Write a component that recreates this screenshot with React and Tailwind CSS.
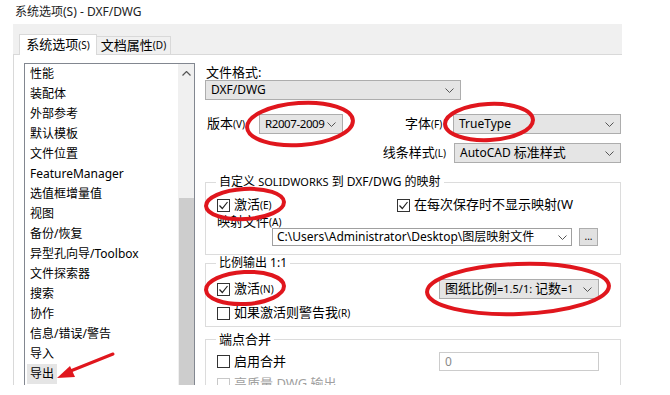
import React from 'react';

const Chevron = () => (
  <svg width="9" height="5" viewBox="0 0 9 5" className="shrink-0">
    <path d="M0.5 0.5 L4.5 4.5 L8.5 0.5" fill="none" stroke="#555" strokeWidth="1" />
  </svg>
);

const Combo = ({ children, className }) => (
  <div className={`h-[20px] border border-[#adadad] bg-[#e5e5e5] flex items-center justify-between pl-[5px] pr-[6px] ${className}`}>
    <span className="whitespace-nowrap">{children}</span>
    <Chevron />
  </div>
);

const Check = ({ checked, disabled }) => (
  <span className={`w-[13px] h-[13px] border ${disabled ? 'border-[#c8c8c8]' : 'border-[#333]'} bg-white flex items-center justify-center shrink-0`}>
    {checked && (
      <svg width="11" height="11" viewBox="0 0 11 11">
        <path d="M1.5 5.5 L4.3 8.5 L9.5 2" fill="none" stroke="#222" strokeWidth="1.2" />
      </svg>
    )}
  </span>
);

const Key = ({ k }) => <span className="text-[10px]">({k})</span>;

const items = [
  '性能', '装配体', '外部参考', '默认模板', '文件位置', 'FeatureManager', '选值框增量值', '视图',
  '备份/恢复', '异型孔向导/Toolbox', '文件探索器', '搜索', '协作', '信息/错误/警告', '导入', '导出',
];

const App = () => {
  return (
    <div className="relative w-[670px] h-[395px] bg-white overflow-hidden text-[12px] text-black font-['Noto_Sans','Noto_Sans_CJK_SC',sans-serif]">
      <div className="h-[24px] pl-[15px] flex items-center text-[12px] text-[#222]">系统选项(S) - DXF/DWG</div>

      <div className="ml-[13px] w-[609px] h-[31px] bg-[#f0f0f0] border-b border-[#d9d9d9] flex items-end pl-[6px]">
        <div className="w-[78px] h-[21px] -mb-px bg-white border border-b-0 border-[#d9d9d9] flex items-center justify-center text-[13px]">
          系统选项<Key k="S" />
        </div>
        <div className="w-[74px] h-[18px] bg-[#f0f0f0] border border-b-0 border-l-0 border-[#d9d9d9] flex items-center justify-center text-[13px]">
          文档属性<Key k="D" />
        </div>
      </div>

      <div className="ml-[13px] h-[330px] border-l border-[#d9d9d9] overflow-hidden flex pl-[10px] pt-[8px]">
        <div className="w-[171px] h-[340px] border border-[#828790] flex shrink-0">
          <div className="flex-1">
            {items.map((t) => (
              <div key={t} className="h-[20px] flex items-center pl-[2px]">
                <span className={`px-[3px] leading-[20px] ${t === '导出' ? 'bg-[#e5e5e5]' : ''}`}>{t}</span>
              </div>
            ))}
          </div>
          <div className="w-[16px] bg-[#f0f0f0] flex flex-col items-center">
            <div className="h-[18px] flex items-center">
              <svg width="9" height="5" viewBox="0 0 9 5">
                <path d="M0.5 4.5 L4.5 0.5 L8.5 4.5" fill="none" stroke="#555" strokeWidth="1.2" />
              </svg>
            </div>
            <div className="mt-[116px] w-[15px] flex-1 bg-[#cdcdcd]" />
          </div>
        </div>

        <div className="ml-[10px] w-[416px] shrink-0 flex flex-col mt-[1px]">
          <div className="h-[16px] leading-[16px] pl-[1px] text-[13px]">文件格式:</div>
          <Combo className="w-[256px]">DXF/DWG</Combo>

          <div className="flex items-center h-[20px] mt-[14px]">
            <span className="w-[54px] pl-[2px] text-[13px]">版本<Key k="V" /></span>
            <Combo className="w-[84px] text-[11.5px] tracking-[-0.4px]">R2007-2009</Combo>
            <span className="ml-[62px] w-[48px] text-[13px]">字体<Key k="F" /></span>
            <Combo className="w-[168px]">TrueType</Combo>
          </div>

          <div className="flex items-center justify-end h-[20px] mt-[9px]">
            <span className="text-[13px]">线条样式<Key k="L" /></span>
            <Combo className="ml-[8px] w-[167px]">AutoCAD <span className="text-[13px]">标准样式</span></Combo>
          </div>

          <fieldset className="mt-[11px] border border-[#dcdcdc] px-[11px] pb-[8px]">
            <legend className="-ml-px px-[3px] leading-[16px] text-[12px]">
              自定义 <span className="text-[11px]">SOLIDWORKS</span> 到 DXF/DWG 的映射
            </legend>
            <div className="flex items-center h-[16px] mt-[7px]">
              <div className="w-[180px] flex items-center">
                <Check checked />
                <span className="ml-[4px] text-[13px]">激活<Key k="E" /></span>
              </div>
              <Check checked />
              <span className="ml-[4px] text-[13px] whitespace-nowrap">在每次保存时不显示映射(W</span>
            </div>
            <div className="h-[14px] leading-[14px] mt-[1px] text-[13px]">映射文件<Key k="A" /></div>
            <div className="flex items-center pl-[55px]">
              <div className="w-[300px] h-[18px] bg-white border border-[#a0a0a0] flex items-center justify-between pl-[4px] pr-[4px]">
                <span className="text-[12px] whitespace-nowrap">C:\Users\Administrator\Desktop\图层映射文件</span>
                <Chevron />
              </div>
              <div className="ml-[7px] w-[19px] h-[18px] bg-[#e1e1e1] border border-[#adadad] flex items-center justify-center text-[10px] leading-none pb-[3px]">...</div>
            </div>
          </fieldset>

          <fieldset className="border border-[#dcdcdc] px-[11px] pb-[5px]">
            <legend className="-ml-px px-[3px] leading-[16px] text-[12px]">比例输出 1:1</legend>
            <div className="flex items-center justify-between h-[20px] mt-[8px]">
              <div className="flex items-center">
                <Check checked />
                <span className="ml-[4px] text-[13px]">激活<Key k="N" /></span>
              </div>
              <Combo className="w-[160px] mr-[10px] text-[13px]">
                图纸比例<span className="text-[11px]">=1.5/1: </span>记数<span className="text-[11px]">=1</span>
              </Combo>
            </div>
            <div className="flex items-center h-[16px] mt-[6px]">
              <Check />
              <span className="ml-[4px] text-[13px]">如果激活则警告我<Key k="R" /></span>
            </div>
          </fieldset>

          <fieldset className="mt-[4px] border border-[#dcdcdc] px-[11px] pb-[5px]">
            <legend className="-ml-px px-[3px] leading-[16px] text-[13px]">端点合并</legend>
            <div className="flex items-center justify-between h-[19px] mt-[5px]">
              <div className="flex items-center">
                <Check />
                <span className="ml-[4px] text-[13px]">启用合并</span>
              </div>
              <div className="w-[160px] h-[19px] mr-[10px] bg-white border border-[#cccccc] flex items-center pl-[5px] text-[#8a8a8a]">0</div>
            </div>
            <div className="flex items-center h-[16px] mt-[5px] text-[#a0a0a0]">
              <Check disabled />
              <span className="ml-[4px] text-[13px]">高质量 DWG 输出</span>
            </div>
          </fieldset>
        </div>
      </div>

      <svg className="absolute inset-0 pointer-events-none" width="670" height="395" viewBox="0 0 670 395">
        <g fill="none" stroke="#e0161d" strokeWidth="4">
          <ellipse cx="300" cy="124" rx="53" ry="21" transform="rotate(-4 300 124)" />
          <ellipse cx="489" cy="122" rx="44" ry="18" transform="rotate(-3 489 122)" />
          <ellipse cx="245" cy="204" rx="39" ry="15" transform="rotate(-3 245 204)" />
          <ellipse cx="245" cy="288" rx="39" ry="16" transform="rotate(-3 245 288)" />
          <ellipse cx="518" cy="289" rx="91" ry="25" transform="rotate(-2 518 289)" />
          <line x1="113" y1="354" x2="68" y2="372" strokeWidth="3" strokeLinecap="round" />
        </g>
        <polygon points="57,378 70,366 75,377" fill="#e0161d" />
      </svg>
    </div>
  );
};

export default App;
